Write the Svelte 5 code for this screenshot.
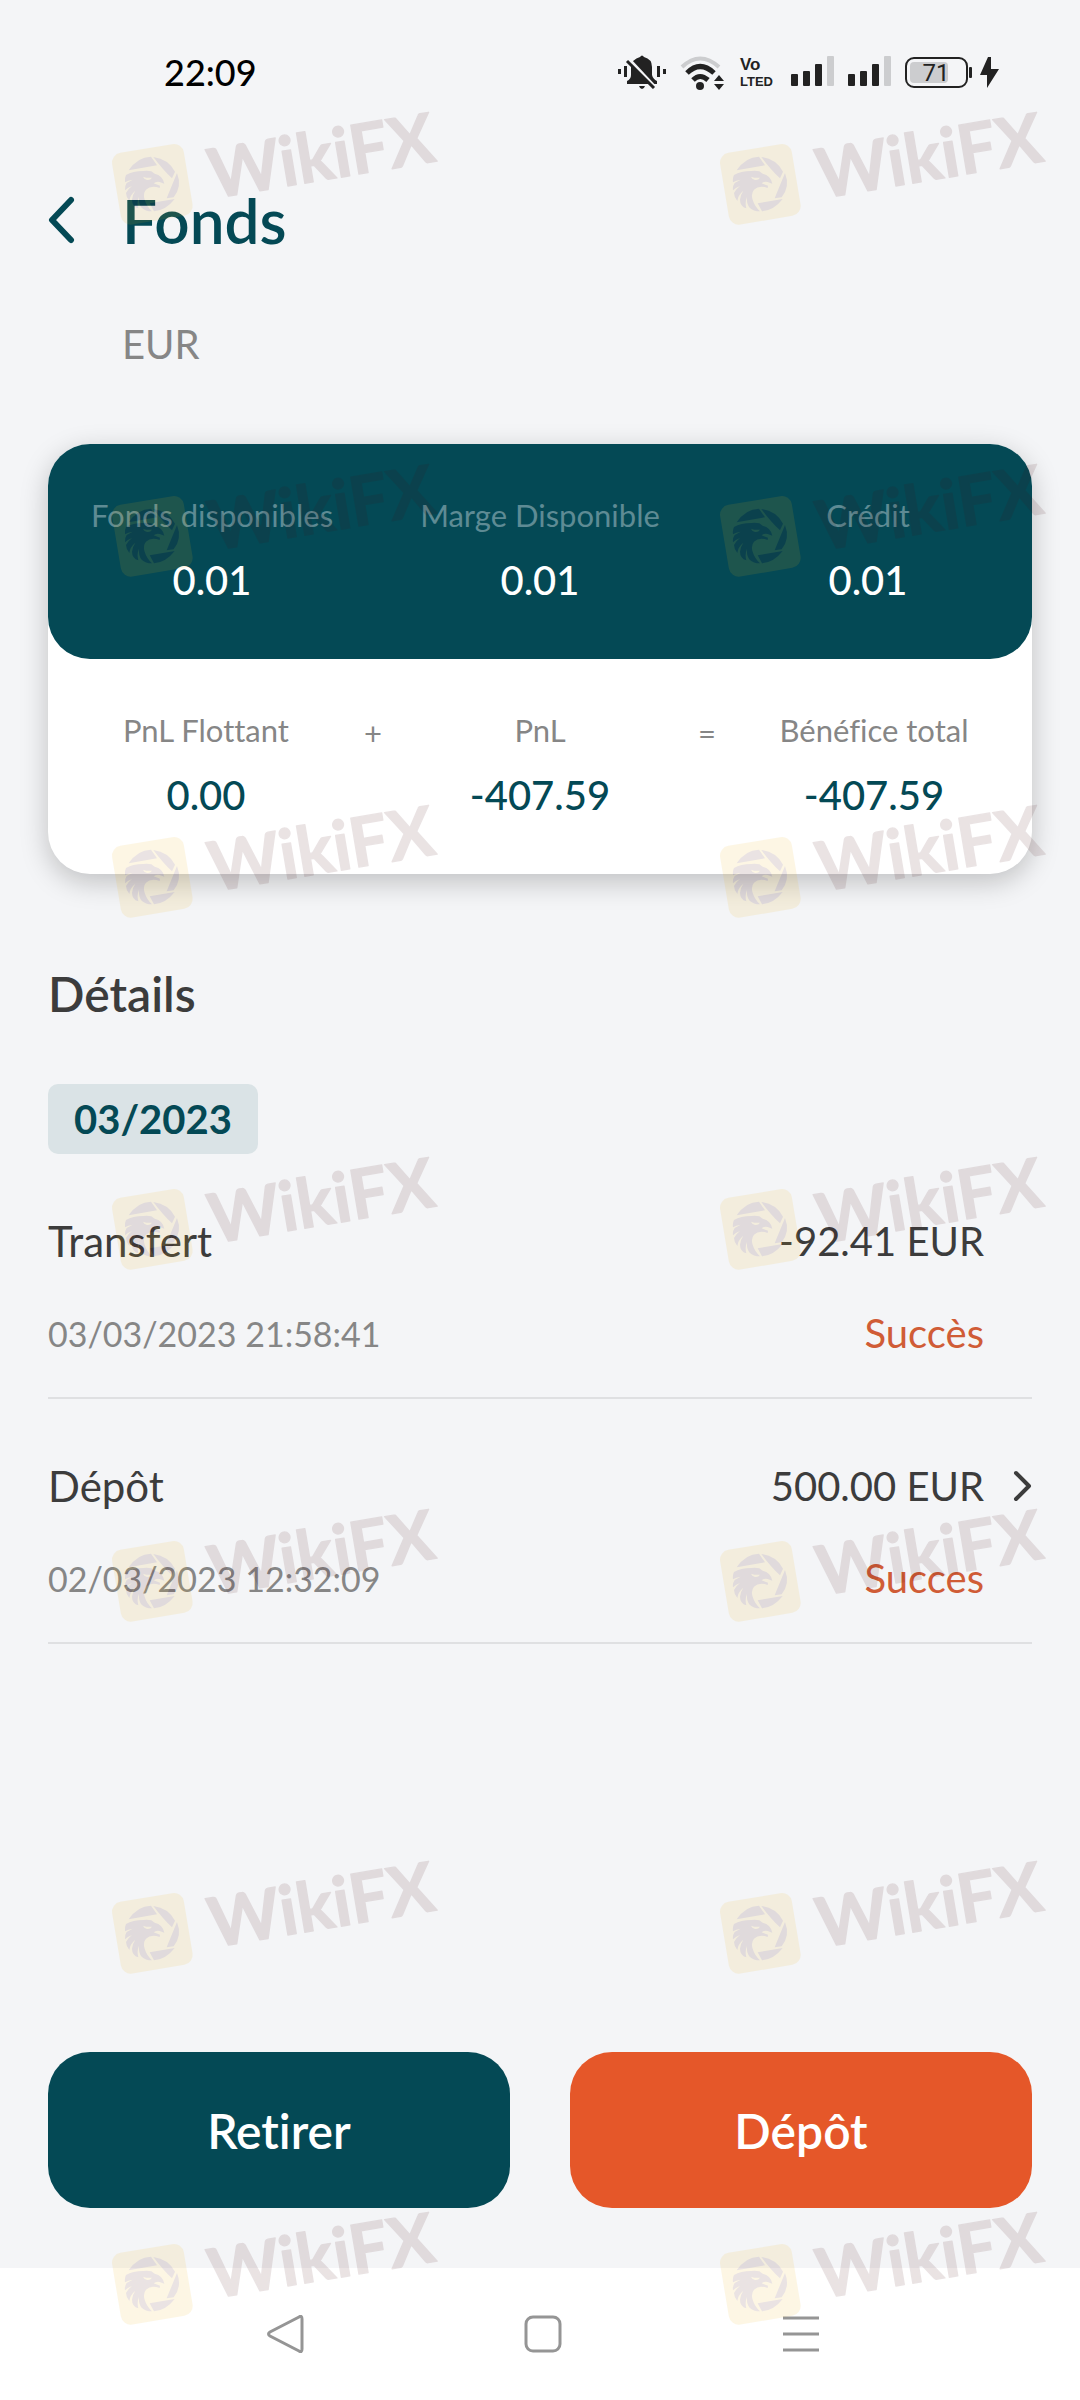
<script lang="ts">
  const balances = [
    { label: "Fonds disponibles", value: "0.01" },
    { label: "Marge Disponible", value: "0.01" },
    { label: "Crédit", value: "0.01" },
  ];

  const profit = [
    { label: "PnL Flottant", value: "0.00", operator: "+" },
    { label: "PnL", value: "-407.59", operator: "=" },
    { label: "Bénéfice total", value: "-407.59", operator: null },
  ];

  const operations = [
    {
      name: "Transfert",
      amount: "-92.41 EUR",
      date: "03/03/2023 21:58:41",
      status: "Succès",
      hasDetail: false,
    },
    {
      name: "Dépôt",
      amount: "500.00 EUR",
      date: "02/03/2023 12:32:09",
      status: "Succes",
      hasDetail: true,
    },
  ];

  // Vertical placement of each row of stamps over the page
  const stampRows = [91, 443, 784, 1136, 1488, 1840, 2191];
</script>

{#snippet signal()}
  <svg class="icon" width="43" height="32" viewBox="0 0 43 32" aria-hidden="true">
    <rect x="0" y="18" width="7" height="12" rx="1" />
    <rect x="12" y="15" width="7" height="15" rx="1" />
    <rect x="24" y="8" width="7" height="22" rx="1" />
    <rect class="dim" x="36" y="0" width="7" height="30" rx="1" />
  </svg>
{/snippet}

{#snippet stamp()}
  <svg class="stamp" width="380" height="150" viewBox="0 0 1140 450">
    <rect
      class="stamp-tile"
      x="78"
      y="171"
      width="218"
      height="218"
      rx="30"
      transform="rotate(-9.5 187 280)"
    />
    <path d="M116 238Q142 198 183 197L201 223Z" />
    <path d="M190 198Q235 204 255 242L246 262Q220 238 190 198Z" />
    <path d="M261 246Q277 286 251 319L230 322Z" />
    <path d="M254 324Q228 358 192 361L179 337Z" />
    <path
      d="M108 252Q128 240 160 240Q172 238 184 241L194 248Q218 253 223 278L209 273Q198 271 191 277L210 284L209 291Q183 282 168 296Q158 308 164 326Q169 344 186 361Q166 361 155 350Q145 338 147 317Q140 334 145 352Q126 346 126 326Q127 312 136 299Q120 312 118 330Q108 318 108 306Q116 292 126 285Q112 290 105 298Q103 286 110 276L128 266Q114 268 105 274Q103 262 108 252Z"
    />
    <path class="stamp-tile" d="M159 257Q172 262 186 260Q180 269 169 266Q162 264 159 257Z" />
    <text transform="translate(368 323) rotate(-9.5)">WikiFX</text>
  </svg>
{/snippet}

<div class="screen">
  <div class="status-bar">
    <span class="clock">22:09</span>
    <div class="status-icons">
      <svg class="icon" width="48" height="34" viewBox="0 0 48 34" aria-hidden="true">
        <rect x="0" y="14" width="3" height="5" />
        <rect x="6" y="11" width="3" height="11" />
        <rect x="39" y="11" width="3" height="11" />
        <rect x="45" y="14" width="3" height="5" />
        <path
          d="M22 2Q24-1 26 2Q34 4 34 12V20Q35 24 39 26V29H9V26Q13 24 13 20V12Q14 4 22 2ZM21 31H27Q26 34 24 34T21 31Z"
        />
        <path class="slash-gap" d="M11 4L39 34" />
        <path class="slash" d="M9 6L36 33" />
      </svg>
      <svg class="icon" width="45" height="35" viewBox="0 0 45 35" aria-hidden="true">
        <path class="arc dim-arc" d="M2 12Q20-5 39 12" />
        <path class="arc" d="M7 18Q20 5 34 18" />
        <path class="arc" d="M13 25Q20 18 28 25" />
        <circle cx="20" cy="31" r="4" />
        <path d="M39 20L44 26H34ZM39 35L44 29H34Z" />
      </svg>
      <svg class="icon volte" width="38" height="38" viewBox="0 0 38 38" aria-hidden="true">
        <text class="volte-top" x="1" y="17">Vo</text>
        <text x="1" y="33">LTED</text>
      </svg>
      {@render signal()}
      {@render signal()}
      <svg class="icon battery" width="95" height="36" viewBox="0 0 95 36" aria-hidden="true">
        <rect class="dim" x="5" y="8" width="38" height="21" rx="4" />
        <rect class="shell" x="1" y="4" width="61" height="29" rx="8" />
        <rect x="64" y="13" width="3" height="11" rx="1" />
        <text x="31" y="27">71</text>
        <path d="M83 3L75 21H82V34L94 15H86V3Z" />
      </svg>
    </div>
  </div>

  <header class="header">
    <button class="back" aria-label="Retour">
      <svg width="28" height="48" viewBox="0 0 28 48" aria-hidden="true">
        <path d="M23 4L4 24L23 44" />
      </svg>
    </button>
    <h1>Fonds</h1>
    <p class="currency">EUR</p>
  </header>

  <main>
    <section class="card">
      <dl class="balances">
        {#each balances as item}
          <div class="figure">
            <dt>{item.label}</dt>
            <dd>{item.value}</dd>
          </div>
        {/each}
      </dl>
      <dl class="profit">
        {#each profit as item}
          <div class="figure">
            <dt>{item.label}</dt>
            <dd>{item.value}</dd>
            {#if item.operator}
              <dd class="operator">{item.operator}</dd>
            {/if}
          </div>
        {/each}
      </dl>
    </section>

    <section class="details">
      <h2>Détails</h2>
      <h3 class="month">03/2023</h3>
      <ul>
        {#each operations as op}
          <li class="operation">
            <span class="name">{op.name}</span>
            <span class="amount">{op.amount}</span>
            {#if op.hasDetail}
              <button class="open" aria-label="Voir {op.name}">
                <svg width="20" height="32" viewBox="0 0 20 32" aria-hidden="true">
                  <path d="M4 3L17 16L4 29" />
                </svg>
              </button>
            {/if}
            <span class="date">{op.date}</span>
            <span class="status">{op.status}</span>
          </li>
        {/each}
      </ul>
    </section>
  </main>

  <div class="actions">
    <button class="withdraw">Retirer</button>
    <button class="deposit">Dépôt</button>
  </div>

  <nav class="nav-bar">
    <button aria-label="Précédent">
      <svg width="38" height="38" viewBox="0 0 38 38" aria-hidden="true">
        <path d="M33 2Q36 0 36 4V34Q36 38 33 36L4 21Q1 19 4 17Z" />
      </svg>
    </button>
    <button aria-label="Accueil">
      <svg width="38" height="38" viewBox="0 0 38 38" aria-hidden="true">
        <rect x="2" y="2" width="34" height="34" rx="7" />
      </svg>
    </button>
    <button aria-label="Menu">
      <svg width="38" height="38" viewBox="0 0 38 38" aria-hidden="true">
        <path d="M1 3H37M1 19H37M1 35H37" />
      </svg>
    </button>
  </nav>

  <div class="stamps" aria-hidden="true">
    {#each stampRows as top}
      <div class="stamp-row" style="top: {top}px">
        {@render stamp()}
        {@render stamp()}
      </div>
    {/each}
  </div>
</div>

<style>
  :global(body) {
    margin: 0;
  }

  .screen {
    position: relative;
    display: flex;
    flex-direction: column;
    min-height: 100vh;
    overflow: hidden;
    background: #f4f5f7;
    color: #3c3c3c;
    font-family: Lato, "Open Sans", sans-serif;
    font-variant-ligatures: none;
  }

  h1,
  h2,
  h3,
  p,
  dl,
  dd,
  ul {
    margin: 0;
    padding: 0;
  }

  button {
    padding: 0;
    border: 0;
    background: none;
    font-family: inherit;
    font-variant-ligatures: none;
    cursor: pointer;
  }

  svg {
    display: block;
  }

  /* Status bar */
  .status-bar {
    display: flex;
    align-items: center;
    justify-content: space-between;
    height: 144px;
    padding: 0 80px 0 164px;
    color: #000;
  }

  .clock {
    font-size: 36px;
    font-weight: 500;
  }

  .status-icons {
    display: flex;
    align-items: center;
    gap: 14px;
  }

  .icon {
    fill: #222;
  }

  .dim {
    fill: #cccdcf;
  }

  .slash,
  .slash-gap {
    fill: none;
    stroke: #222;
    stroke-width: 3;
  }

  .slash-gap {
    stroke: #f4f5f7;
  }

  .arc {
    fill: none;
    stroke: #222;
    stroke-width: 5;
  }

  .dim-arc {
    stroke: #cccdcf;
    stroke-width: 4;
  }

  .volte text {
    font-family: "Liberation Sans", sans-serif;
    font-size: 13px;
    font-weight: 700;
  }

  .volte .volte-top {
    font-size: 17px;
  }

  .battery .shell {
    fill: none;
    stroke: #222;
    stroke-width: 2;
  }

  .battery text {
    font-family: Roboto, sans-serif;
    font-size: 24px;
    text-anchor: middle;
  }

  /* Header */
  .header {
    display: grid;
    grid-template-columns: 74px 1fr;
    align-items: center;
    row-gap: 64px;
    padding: 40px 48px 0;
  }

  .back path,
  .open path {
    fill: none;
    stroke: #044955;
    stroke-width: 6;
    stroke-linecap: round;
    stroke-linejoin: round;
  }

  .back {
    justify-self: start;
  }

  h1 {
    color: #044955;
    font-size: 62px;
    font-weight: 600;
    line-height: 72px;
  }

  .currency {
    grid-column: 2;
    color: #868686;
    font-size: 40px;
    line-height: 48px;
  }

  /* Summary card */
  .card {
    margin: 76px 48px 0;
    border-radius: 42px;
    background: #fff;
    box-shadow: 0 8px 28px rgba(0, 0, 0, 0.22);
  }

  .balances,
  .profit {
    display: flex;
    height: 215px;
    box-sizing: border-box;
    padding-top: 50px;
    text-align: center;
  }

  .balances {
    border-radius: 42px;
    background: #044955;
    color: #fff;
  }

  .profit {
    gap: 18px;
    color: #044955;
  }

  .figure {
    position: relative;
    flex: 1;
  }

  .figure dt {
    font-size: 31px;
    line-height: 42px;
  }

  .balances dt {
    color: #5e8b94;
  }

  .profit dt {
    color: #868686;
  }

  .figure dd {
    margin-top: 20px;
    font-size: 40px;
    font-weight: 500;
    line-height: 48px;
  }

  .figure .operator {
    position: absolute;
    top: 0;
    left: 100%;
    width: 18px;
    margin: 0;
    color: #868686;
    font-size: 31px;
    font-weight: 400;
  }

  /* Details */
  .details {
    margin: 90px 48px 0;
  }

  h2 {
    font-size: 48px;
    font-weight: 600;
    line-height: 60px;
  }

  .month {
    width: fit-content;
    margin-top: 60px;
    padding: 0 26px;
    border-radius: 10px;
    background: #dae3e6;
    color: #044955;
    font-size: 40px;
    font-weight: 700;
    line-height: 70px;
  }

  ul {
    list-style: none;
  }

  .operation {
    display: grid;
    grid-template-columns: 1fr auto 48px;
    align-items: center;
    row-gap: 44px;
    padding: 61px 0 41px;
    border-bottom: 2px solid #dfe0e2;
  }

  .name,
  .amount {
    font-size: 42px;
    line-height: 52px;
  }

  .amount {
    font-size: 40px;
  }

  .open {
    justify-self: end;
  }

  .open path {
    stroke: #3c3c3c;
    stroke-width: 4;
  }

  .date,
  .status {
    font-size: 34px;
    line-height: 45px;
  }

  .date {
    grid-column: 1;
    color: #868686;
  }

  .status {
    color: #d05c36;
    font-size: 40px;
    text-align: right;
  }

  /* Bottom actions */
  .actions {
    display: flex;
    gap: 60px;
    margin-top: auto;
    padding: 60px 48px;
  }

  .actions button {
    flex: 1;
    height: 156px;
    border-radius: 42px;
    color: #fff;
    font-size: 48px;
    font-weight: 600;
  }

  .actions .withdraw {
    background: #044955;
  }

  .actions .deposit {
    background: #e55729;
  }

  .nav-bar {
    display: flex;
    align-items: center;
    justify-content: center;
    gap: 220px;
    height: 132px;
    padding-left: 6px;
    background: #fff;
  }

  .nav-bar svg {
    fill: none;
    stroke: #959595;
    stroke-width: 3;
  }

  /* Stamps laid over the whole screen */
  .stamps {
    position: absolute;
    inset: 0;
    opacity: 0.11;
    pointer-events: none;
  }

  .stamp-row {
    position: absolute;
    left: 90px;
    display: flex;
    gap: 228px;
  }

  .stamp {
    flex: none;
    overflow: visible;
    fill: #460a0f;
  }

  .stamp-tile {
    fill: #f0b414;
  }

  .stamp text {
    font-size: 206px;
    font-weight: 700;
    stroke: #460a0f;
    stroke-width: 4;
    stroke-linejoin: round;
  }
</style>
